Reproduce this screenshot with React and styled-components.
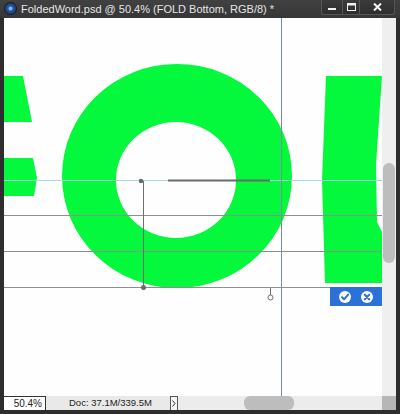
import React from 'react';
import styled, { createGlobalStyle } from 'styled-components';

const Global = createGlobalStyle`
  html, body { margin: 0; padding: 0; background: #2b2b2b; }
  body { font-family: "Liberation Sans", Arial, sans-serif; }
`;

const Window = styled.div`
  width: 400px;
  height: 414px;
  display: flex;
  flex-direction: column;
  background: #2d2d2d;
  overflow: hidden;
`;

const TitleBar = styled.div`
  height: 18px;
  flex: 0 0 18px;
  display: flex;
  align-items: flex-start;
  background: linear-gradient(#414141, #363636);
`;

const AppIcon = styled.div`
  width: 11px;
  height: 11px;
  margin: 3px 0 0 5px;
  border-radius: 50%;
  background: radial-gradient(circle at 50% 50%, #7fb4ff 0 18%, #2a5ea8 30%, #163a6e 70%, #0e2340 100%);
  box-shadow: 0 0 0 1px #1a1a1a;
`;

const Title = styled.div`
  margin-left: 5px;
  line-height: 18px;
  font-size: 11px;
  color: #e6e6e6;
  white-space: nowrap;
  font-family: "Liberation Sans", Arial, sans-serif;
`;

const Controls = styled.div`
  margin-left: auto;
  margin-right: 5px;
  display: flex;
  height: 15px;
`;

const CtrlButton = styled.div`
  width: ${p => p.w}px;
  height: 15px;
  box-sizing: border-box;
  border: 1px solid #555;
  border-top: none;
  border-left-width: ${p => (p.first ? 1 : 0)}px;
  border-radius: ${p => (p.first ? '0 0 0 3px' : p.last ? '0 0 3px 0' : '0')};
  background: linear-gradient(#3b3b3b, #2e2e2e);
  display: flex;
  align-items: center;
  justify-content: center;
`;

const Frame = styled.div`
  flex: 1;
  display: flex;
  flex-direction: column;
  padding: 0 4px 4px 4px;
  min-height: 0;
`;

const Body = styled.div`
  height: 378px;
  display: flex;
`;

const Canvas = styled.div`
  position: relative;
  width: 378px;
  height: 378px;
  background: #fefefe;
  overflow: hidden;
`;

const Art = styled.svg`
  display: block;
  width: 378px;
  height: 378px;
`;

const CommitBar = styled.div`
  position: absolute;
  left: 326px;
  top: 269px;
  width: 52px;
  height: 19px;
  background: #2a72d8;
  display: flex;
  align-items: center;
  justify-content: space-around;
  padding: 0 4px;
  box-sizing: border-box;
`;

const VScroll = styled.div`
  width: 14px;
  background: #efefef;
  display: flex;
  flex-direction: column;
  align-items: center;
`;

const VThumb = styled.div`
  margin-top: 145px;
  width: 12px;
  height: 100px;
  border-radius: 6px;
  background: #bdbdbd;
`;

const StatusBar = styled.div`
  height: 14px;
  display: flex;
  background: #e9e9e9;
  font-size: 9.5px;
  color: #222;
`;

const ZoomBox = styled.div`
  width: 42px;
  box-sizing: border-box;
  background: #fff;
  border: 1px solid #333;
  border-left: none;
  border-bottom: none;
  text-align: right;
  padding-right: 3px;
  line-height: 13px;
  font-size: 10px;
`;

const DocInfo = styled.div`
  width: 124px;
  box-sizing: border-box;
  padding-left: 23px;
  line-height: 14px;
  white-space: nowrap;
`;

const ArrowButton = styled.div`
  width: 8px;
  box-sizing: border-box;
  border: 1px solid #555;
  border-bottom: none;
  background: #f4f4f4;
  display: flex;
  align-items: center;
  justify-content: center;
`;

const HScroll = styled.div`
  flex: 1;
  display: flex;
  background: #ececec;
`;

const HThumb = styled.div`
  margin-left: 66px;
  width: 50px;
  height: 14px;
  border-radius: 6px;
  background: #bdbdbd;
`;

const Corner = styled.div`
  width: 14px;
  background: #b6b6b6;
`;

const GREEN = '#04f83c';

function CheckIcon() {
  return (
    <svg width="12" height="12" viewBox="0 0 12 12">
      <circle cx="6" cy="6" r="6" fill="#fff" />
      <path d="M3 6.2 L5.1 8.3 L9.1 3.6" fill="none" stroke="#2a72d8" strokeWidth="2" strokeLinecap="round" strokeLinejoin="round" />
    </svg>
  );
}

function CancelIcon() {
  return (
    <svg width="12" height="12" viewBox="0 0 12 12">
      <circle cx="6" cy="6" r="6" fill="#fff" />
      <path d="M3.8 3.8 L8.2 8.2 M8.2 3.8 L3.8 8.2" fill="none" stroke="#2a72d8" strokeWidth="2" strokeLinecap="round" />
    </svg>
  );
}

export default function App() {
  return (
    <>
      <Global />
      <Window>
        <TitleBar>
          <AppIcon />
          <Title>FoldedWord.psd @ 50.4% (FOLD Bottom, RGB/8) *</Title>
          <Controls>
            <CtrlButton w={22} first>
              <svg width="8" height="8" viewBox="0 0 8 8"><rect x="0" y="5" width="8" height="2" fill="#f0f0f0" /></svg>
            </CtrlButton>
            <CtrlButton w={17}>
              <svg width="9" height="8" viewBox="0 0 9 8"><rect x="0.5" y="0.5" width="8" height="7" fill="none" stroke="#f0f0f0" /><rect x="0.5" y="0.5" width="8" height="2" fill="#f0f0f0" /></svg>
            </CtrlButton>
            <CtrlButton w={35} last>
              <svg width="9" height="8" viewBox="0 0 9 8"><path d="M1 0.5 L8 7.5 M8 0.5 L1 7.5" stroke="#f4f4f4" strokeWidth="2" /></svg>
            </CtrlButton>
          </Controls>
        </TitleBar>
        <Frame>
          <Body>
            <Canvas>
              <Art viewBox="4 18 378 378">
                <polygon points="4,76 23,76 32,122 4,122" fill={GREEN} />
                <polygon points="4,158 33,158 37,178 34,196 4,196" fill={GREEN} />
                <path
                  fillRule="evenodd"
                  fill={GREEN}
                  d="M62,176 A115,112 0 1,0 292,176 A115,112 0 1,0 62,176 Z M116,180 A60,58 0 1,0 236,180 A60,58 0 1,0 116,180 Z"
                />
                <polygon points="326,76 382,76 376,165 377,222 384,236 384,283 325,283 322,180" fill={GREEN} />
                <line x1="4" y1="180.5" x2="382" y2="180.5" stroke="#a9d6df" strokeWidth="1" />
                <line x1="4" y1="215.5" x2="382" y2="215.5" stroke="#8e8e8e" strokeWidth="1" />
                <line x1="4" y1="251.5" x2="382" y2="251.5" stroke="#8e8e8e" strokeWidth="1" />
                <line x1="4" y1="287.5" x2="382" y2="287.5" stroke="#8e8e8e" strokeWidth="1" />
                <line x1="281.5" y1="18" x2="281.5" y2="396" stroke="#7d8c9c" strokeWidth="1" />
                <line x1="143.5" y1="181" x2="143.5" y2="287" stroke="#6f6f6f" strokeWidth="1" />
                <line x1="168" y1="180.5" x2="270" y2="180.5" stroke="#6a6a6a" strokeWidth="2" />
                <circle cx="141" cy="181" r="2.3" fill="#6a6a6a" />
                <circle cx="143.5" cy="287.5" r="2.5" fill="#6a6a6a" />
                <line x1="270.5" y1="288" x2="270.5" y2="295" stroke="#6f6f6f" strokeWidth="1" />
                <circle cx="270.5" cy="297.5" r="2.5" fill="#fff" stroke="#6f6f6f" strokeWidth="1" />
              </Art>
              <CommitBar>
                <CheckIcon />
                <CancelIcon />
              </CommitBar>
            </Canvas>
            <VScroll>
              <VThumb />
            </VScroll>
          </Body>
          <StatusBar>
            <ZoomBox>50.4%</ZoomBox>
            <DocInfo>Doc: 37.1M/339.5M</DocInfo>
            <ArrowButton>
              <svg width="4" height="7" viewBox="0 0 4 7"><path d="M0.5 0.5 L3 3.5 L0.5 6.5" fill="none" stroke="#333" strokeWidth="1" /></svg>
            </ArrowButton>
            <HScroll>
              <HThumb />
            </HScroll>
            <Corner />
          </StatusBar>
        </Frame>
      </Window>
    </>
  );
}
